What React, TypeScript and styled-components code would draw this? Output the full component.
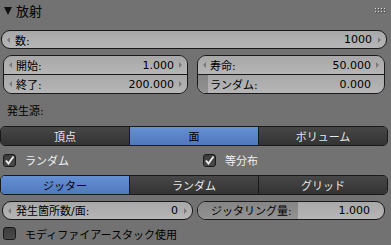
import styled, { createGlobalStyle } from 'styled-components'

const GlobalStyle = createGlobalStyle`
  html, body {
    margin: 0;
    padding: 0;
    background: #727272;
  }
  body {
    font-family: "DejaVu Sans", "Noto Sans CJK JP", sans-serif;
    font-size: 11px;
    color: #000;
  }
`

const Panel = styled.div`
  width: 391px;
  height: 245px;
  background: #727272;
  display: flex;
  flex-direction: column;
  overflow: hidden;
`

const Header = styled.div`
  height: 22px;
  display: flex;
  align-items: center;
  justify-content: space-between;
  padding: 0 5px 0 4px;
  font-size: 13px;
`

const Title = styled.div`
  display: flex;
  align-items: center;
  gap: 4px;
`

const Triangle = styled.span`
  width: 0;
  height: 0;
  border-left: 4.5px solid transparent;
  border-right: 4.5px solid transparent;
  border-top: 8px solid #111;
`

const Field = styled.div`
  position: relative;
  height: 19px;
  box-sizing: border-box;
  border: 1px solid #191919;
  border-radius: 9px;
  background: linear-gradient(#a8a8a8, #b6b6b6);
  display: flex;
  align-items: center;
  padding: 0 14px 0 13px;
  overflow: hidden;
`

const FullRow = styled.div`
  margin: 9px 4px 0 1px;
`

const Label = styled.span`
  position: relative;
  flex: 1;
  white-space: nowrap;
`

const Value = styled.span`
  position: relative;
  white-space: nowrap;
`

const ArrowL = styled.span`
  position: absolute;
  left: 5px;
  top: 6px;
  border-top: 3px solid transparent;
  border-bottom: 3px solid transparent;
  border-right: 3px solid #7a7a7a;
`

const ArrowR = styled.span`
  position: absolute;
  right: 5px;
  top: 6px;
  border-top: 3px solid transparent;
  border-bottom: 3px solid transparent;
  border-left: 3px solid #7a7a7a;
`

const Fill = styled.span`
  position: absolute;
  left: 0;
  top: 0;
  bottom: 0;
  background: linear-gradient(#858585, #939393);
`

const Columns = styled.div<{ $cols: string; $gap: number; $left: number; $top: number }>`
  display: grid;
  grid-template-columns: ${(p) => p.$cols};
  column-gap: ${(p) => p.$gap}px;
  padding-left: ${(p) => p.$left}px;
  margin-top: ${(p) => p.$top}px;
`

const Block = styled.div`
  border: 1px solid #191919;
  border-radius: 9px;
  overflow: hidden;
  display: flex;
  flex-direction: column;
`

const BlockCell = styled.div`
  position: relative;
  height: 18px;
  display: flex;
  align-items: center;
  padding: 0 13px 0 12px;
  background: linear-gradient(#a8a8a8, #b6b6b6);
  & + & {
    border-top: 1px solid #191919;
  }
`

const SectionLabel = styled.div`
  height: 20px;
  margin-top: 6px;
  padding-left: 7px;
  display: flex;
  align-items: center;
`

const Tabs = styled.div<{ $top: number }>`
  display: grid;
  grid-template-columns: 128px 129px 1fr;
  height: 20px;
  margin: ${(p) => p.$top}px 3px 0 0;
  border: 1px solid #191919;
  border-radius: 5px;
  overflow: hidden;
  box-sizing: border-box;
`

const Tab = styled.div<{ $active?: boolean }>`
  display: flex;
  align-items: center;
  justify-content: center;
  color: ${(p) => (p.$active ? '#000' : '#e8e8e8')};
  background: ${(p) =>
    p.$active
      ? 'linear-gradient(#6690d4, #4f78bd)'
      : 'linear-gradient(#474747, #333333)'};
  & + & {
    border-left: 1px solid #191919;
  }
`

const CheckRow = styled.div<{ $top: number; $height: number }>`
  display: grid;
  grid-template-columns: 200px 1fr;
  height: ${(p) => p.$height}px;
  margin-top: ${(p) => p.$top}px;
  padding-left: 3px;
  align-items: center;
`

const Check = styled.label<{ $on?: boolean }>`
  display: flex;
  align-items: center;
  gap: 9px;
  color: ${(p) => (p.$on ? '#f0f0f0' : '#000')};
  white-space: nowrap;
`

const Box = styled.span`
  width: 13px;
  height: 13px;
  box-sizing: border-box;
  border: 1px solid #191919;
  border-radius: 3px;
  background: linear-gradient(#3c3c3c, #4a4a4a);
  display: flex;
  align-items: center;
  justify-content: center;
`

const Grip = () => (
  <svg width="11" height="5" viewBox="0 0 11 5">
    {[0, 3, 6, 9].map((x) =>
      [0, 3].map((y) => (
        <g key={`${x}-${y}`}>
          <rect x={x + 1} y={y + 1} width="1" height="1" fill="#4a4a4a" />
          <rect x={x} y={y} width="1" height="1" fill="#d8d8d8" />
        </g>
      ))
    )}
  </svg>
)

const Tick = () => (
  <svg width="11" height="11" viewBox="0 0 11 11">
    <polyline points="2,5.5 4.5,8.5 9.5,1.5" fill="none" stroke="#f2f2f2" strokeWidth="1.8" />
  </svg>
)

const CheckItem = ({ label, on }: { label: string; on?: boolean }) => (
  <Check $on={on}>
    <Box>{on && <Tick />}</Box>
    {label}
  </Check>
)

const App = () => (
  <Panel>
    <GlobalStyle />
    <Header>
      <Title>
        <Triangle />
        放射
      </Title>
      <Grip />
    </Header>

    <FullRow>
      <Field>
        <ArrowL />
        <Label>数:</Label>
        <Value>1000</Value>
        <ArrowR />
      </Field>
    </FullRow>

    <Columns $cols="185px 188px" $gap={9} $left={3} $top={6}>
      <Block>
        <BlockCell>
          <ArrowL />
          <Label>開始:</Label>
          <Value>1.000</Value>
          <ArrowR />
        </BlockCell>
        <BlockCell>
          <ArrowL />
          <Label>終了:</Label>
          <Value>200.000</Value>
          <ArrowR />
        </BlockCell>
      </Block>
      <Block>
        <BlockCell>
          <ArrowL />
          <Label>寿命:</Label>
          <Value>50.000</Value>
          <ArrowR />
        </BlockCell>
        <BlockCell>
          <Fill style={{ width: 10 }} />
          <Label>ランダム:</Label>
          <Value>0.000</Value>
        </BlockCell>
      </Block>
    </Columns>

    <SectionLabel>発生源:</SectionLabel>

    <Tabs $top={6}>
      <Tab>頂点</Tab>
      <Tab $active>面</Tab>
      <Tab>ボリューム</Tab>
    </Tabs>

    <CheckRow $top={4} $height={22}>
      <CheckItem label="ランダム" on />
      <CheckItem label="等分布" on />
    </CheckRow>

    <Tabs $top={4}>
      <Tab $active>ジッター</Tab>
      <Tab>ランダム</Tab>
      <Tab>グリッド</Tab>
    </Tabs>

    <Columns $cols="191px 188px" $gap={4} $left={2} $top={6}>
      <Field>
        <ArrowL />
        <Label>発生箇所数/面:</Label>
        <Value>0</Value>
        <ArrowR />
      </Field>
      <Field>
        <Fill style={{ width: 100 }} />
        <Label>ジッタリング量:</Label>
        <Value>1.000</Value>
      </Field>
    </Columns>

    <CheckRow $top={3} $height={23}>
      <CheckItem label="モディファイアースタック使用" />
    </CheckRow>
  </Panel>
)

export default App
